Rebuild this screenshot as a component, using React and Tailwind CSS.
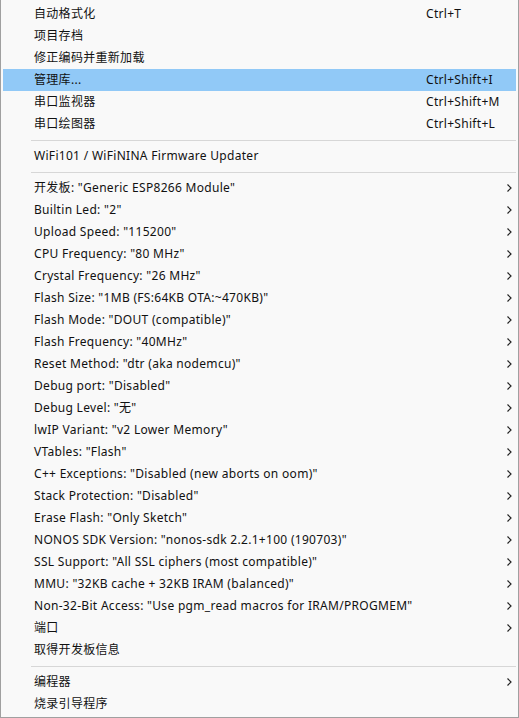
import React from "react";

const top = [
  { label: "自动格式化", key: "Ctrl+T" },
  { label: "项目存档" },
  { label: "修正编码并重新加载" },
  { label: "管理库...", key: "Ctrl+Shift+I", active: true },
  { label: "串口监视器", key: "Ctrl+Shift+M" },
  { label: "串口绘图器", key: "Ctrl+Shift+L" },
];

const boards = [
  '开发板: "Generic ESP8266 Module"',
  'Builtin Led: "2"',
  'Upload Speed: "115200"',
  'CPU Frequency: "80 MHz"',
  'Crystal Frequency: "26 MHz"',
  'Flash Size: "1MB (FS:64KB OTA:~470KB)"',
  'Flash Mode: "DOUT (compatible)"',
  'Flash Frequency: "40MHz"',
  'Reset Method: "dtr (aka nodemcu)"',
  'Debug port: "Disabled"',
  'Debug Level: "无"',
  'lwIP Variant: "v2 Lower Memory"',
  'VTables: "Flash"',
  'C++ Exceptions: "Disabled (new aborts on oom)"',
  'Stack Protection: "Disabled"',
  'Erase Flash: "Only Sketch"',
  'NONOS SDK Version: "nonos-sdk 2.2.1+100 (190703)"',
  'SSL Support: "All SSL ciphers (most compatible)"',
  'MMU: "32KB cache + 32KB IRAM (balanced)"',
  'Non-32-Bit Access: "Use pgm_read macros for IRAM/PROGMEM"',
  "端口",
];

// little submenu chevron
function Arrow() {
  return (
    <svg width="5" height="8" viewBox="0 0 5 8" className="ml-auto">
      <polyline points="0.5,0.5 4,4 0.5,7.5" fill="none" stroke="#222" strokeWidth="1.2" />
    </svg>
  );
}

function Item({ label, shortcut, sub, active }) {
  return (
    <div
      className={`h-[22px] flex items-center pl-[31px] pr-[4px] text-[12px] tracking-[0.3px] text-[#111] ${
        active ? "bg-[#91c9f7]" : ""
      }`}
    >
      <span className="flex-1 whitespace-nowrap">{label}</span>
      {shortcut && <span className="w-[86px] whitespace-nowrap">{shortcut}</span>}
      {sub && <Arrow />}
    </div>
  );
}

function Sep() {
  return (
    <div className="h-[10px] flex items-center pl-[28px]">
      <div className="h-px w-full bg-[#d7d7d7]" />
    </div>
  );
}

export default function App() {
  return (
    <div
      className="w-[519px] h-[718px] bg-[#f9f9f9] border-l border-r border-b border-[#a0a0a0] px-[2px] pt-[3px] overflow-hidden"
      style={{ fontFamily: '"Noto Sans", "Noto Sans CJK SC", sans-serif' }}
    >
      {top.map((t) => (
        <Item key={t.label} label={t.label} shortcut={t.key} active={t.active} />
      ))}
      <Sep />
      <Item label="WiFi101 / WiFiNINA Firmware Updater" />
      <Sep />
      {boards.map((b) => (
        <Item key={b} label={b} sub />
      ))}
      <Item label="取得开发板信息" />
      <Sep />
      <Item label="编程器" sub />
      <Item label="烧录引导程序" />
    </div>
  );
}
